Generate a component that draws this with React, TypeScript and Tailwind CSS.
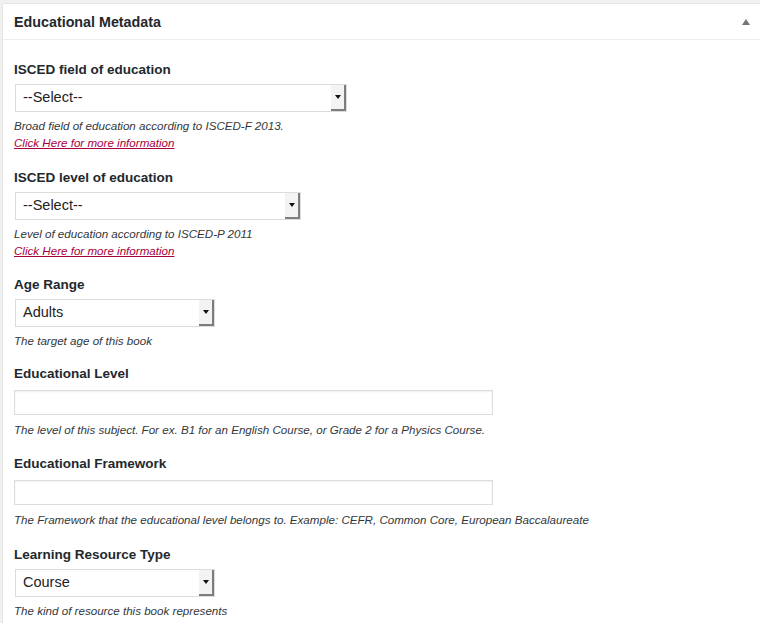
import React from "react"

type Field =
  | { kind: "select"; label: string; value: string; width: string; help: string; link?: boolean; gap: string }
  | { kind: "input"; label: string; help: string; gap: string }

const fields: Field[] = [
  {
    kind: "select",
    label: "ISCED field of education",
    value: "--Select--",
    width: "w-[332px]",
    help: "Broad field of education according to ISCED-F 2013.",
    link: true,
    gap: "mb-[18px]",
  },
  {
    kind: "select",
    label: "ISCED level of education",
    value: "--Select--",
    width: "w-[286px]",
    help: "Level of education according to ISCED-P 2011",
    link: true,
    gap: "mb-[17px]",
  },
  {
    kind: "select",
    label: "Age Range",
    value: "Adults",
    width: "w-[200px]",
    help: "The target age of this book",
    gap: "mb-[16px]",
  },
  {
    kind: "input",
    label: "Educational Level",
    help: "The level of this subject. For ex. B1 for an English Course, or Grade 2 for a Physics Course.",
    gap: "mb-[17px]",
  },
  {
    kind: "input",
    label: "Educational Framework",
    help: "The Framework that the educational level belongs to. Example: CEFR, Common Core, European Baccalaureate",
    gap: "mb-[18px]",
  },
  {
    kind: "select",
    label: "Learning Resource Type",
    value: "Course",
    width: "w-[200px]",
    help: "The kind of resource this book represents",
    gap: "mb-0",
  },
]

function FakeSelect({ value, width }: { value: string; width: string }) {
  return (
    <div
      className={`${width} ml-[1px] mt-[5px] h-[28px] flex items-stretch border border-[#dcdcdc] bg-white`}
    >
      <span className="flex-1 flex items-center pl-[7px] text-[14.5px] text-[#222]">{value}</span>
      {/* old-style dropdown button */}
      <span className="w-[15px] flex items-center justify-center bg-[#f3f3f3] border-r-2 border-b-2 border-[#7d7d7d]">
        <svg width="6" height="4" viewBox="0 0 6 4">
          <path d="M0 0h6L3 4z" fill="#111" />
        </svg>
      </span>
    </div>
  )
}

export default function App() {
  return (
    <div
      className="min-h-screen bg-[#f1f1f1] pt-[3px] pl-[2px] flex flex-col"
      style={{ fontFamily: '"Liberation Sans", Arial, sans-serif' }}
    >
      <div className="flex-1 bg-white border-t border-l border-[#e5e5e5]">
        {/* Header */}
        <div className="h-[36px] flex items-center justify-between pl-[11px] pr-[10px] pt-[1px] border-b border-[#eeeeee]">
          <h2 className="text-[14.3px] leading-[20px] font-bold text-[#23282d]">Educational Metadata</h2>
          <svg width="8" height="6" viewBox="0 0 8 6">
            <path d="M0 6L4 0l4 6z" fill="#72777c" />
          </svg>
        </div>

        {/* Body */}
        <div className="pl-[11px] pt-[21px] flex flex-col">
          {fields.map((f) => (
            <div key={f.label} className={`flex flex-col items-start ${f.gap}`}>
              <label className="text-[13.5px] leading-[18px] font-bold text-[#23282d]">{f.label}</label>
              {f.kind === "select" ? (
                <FakeSelect value={f.value} width={f.width} />
              ) : (
                <input
                  type="text"
                  className="mt-[7px] w-[479px] h-[25px] border border-[#dddddd] shadow-[inset_0_1px_2px_rgba(0,0,0,0.07)] outline-none"
                />
              )}
              <p
                className={`${f.kind === "select" ? "mt-[5px]" : "mt-[6px]"} text-[11.6px] leading-[17px] italic text-[#32373c]`}
              >
                {f.help}
              </p>
              {f.kind === "select" && f.link && (
                <a href="#" className="text-[11.6px] leading-[17px] italic text-[#a8003c] underline">
                  Click Here for more information
                </a>
              )}
            </div>
          ))}
        </div>
      </div>
    </div>
  )
}
